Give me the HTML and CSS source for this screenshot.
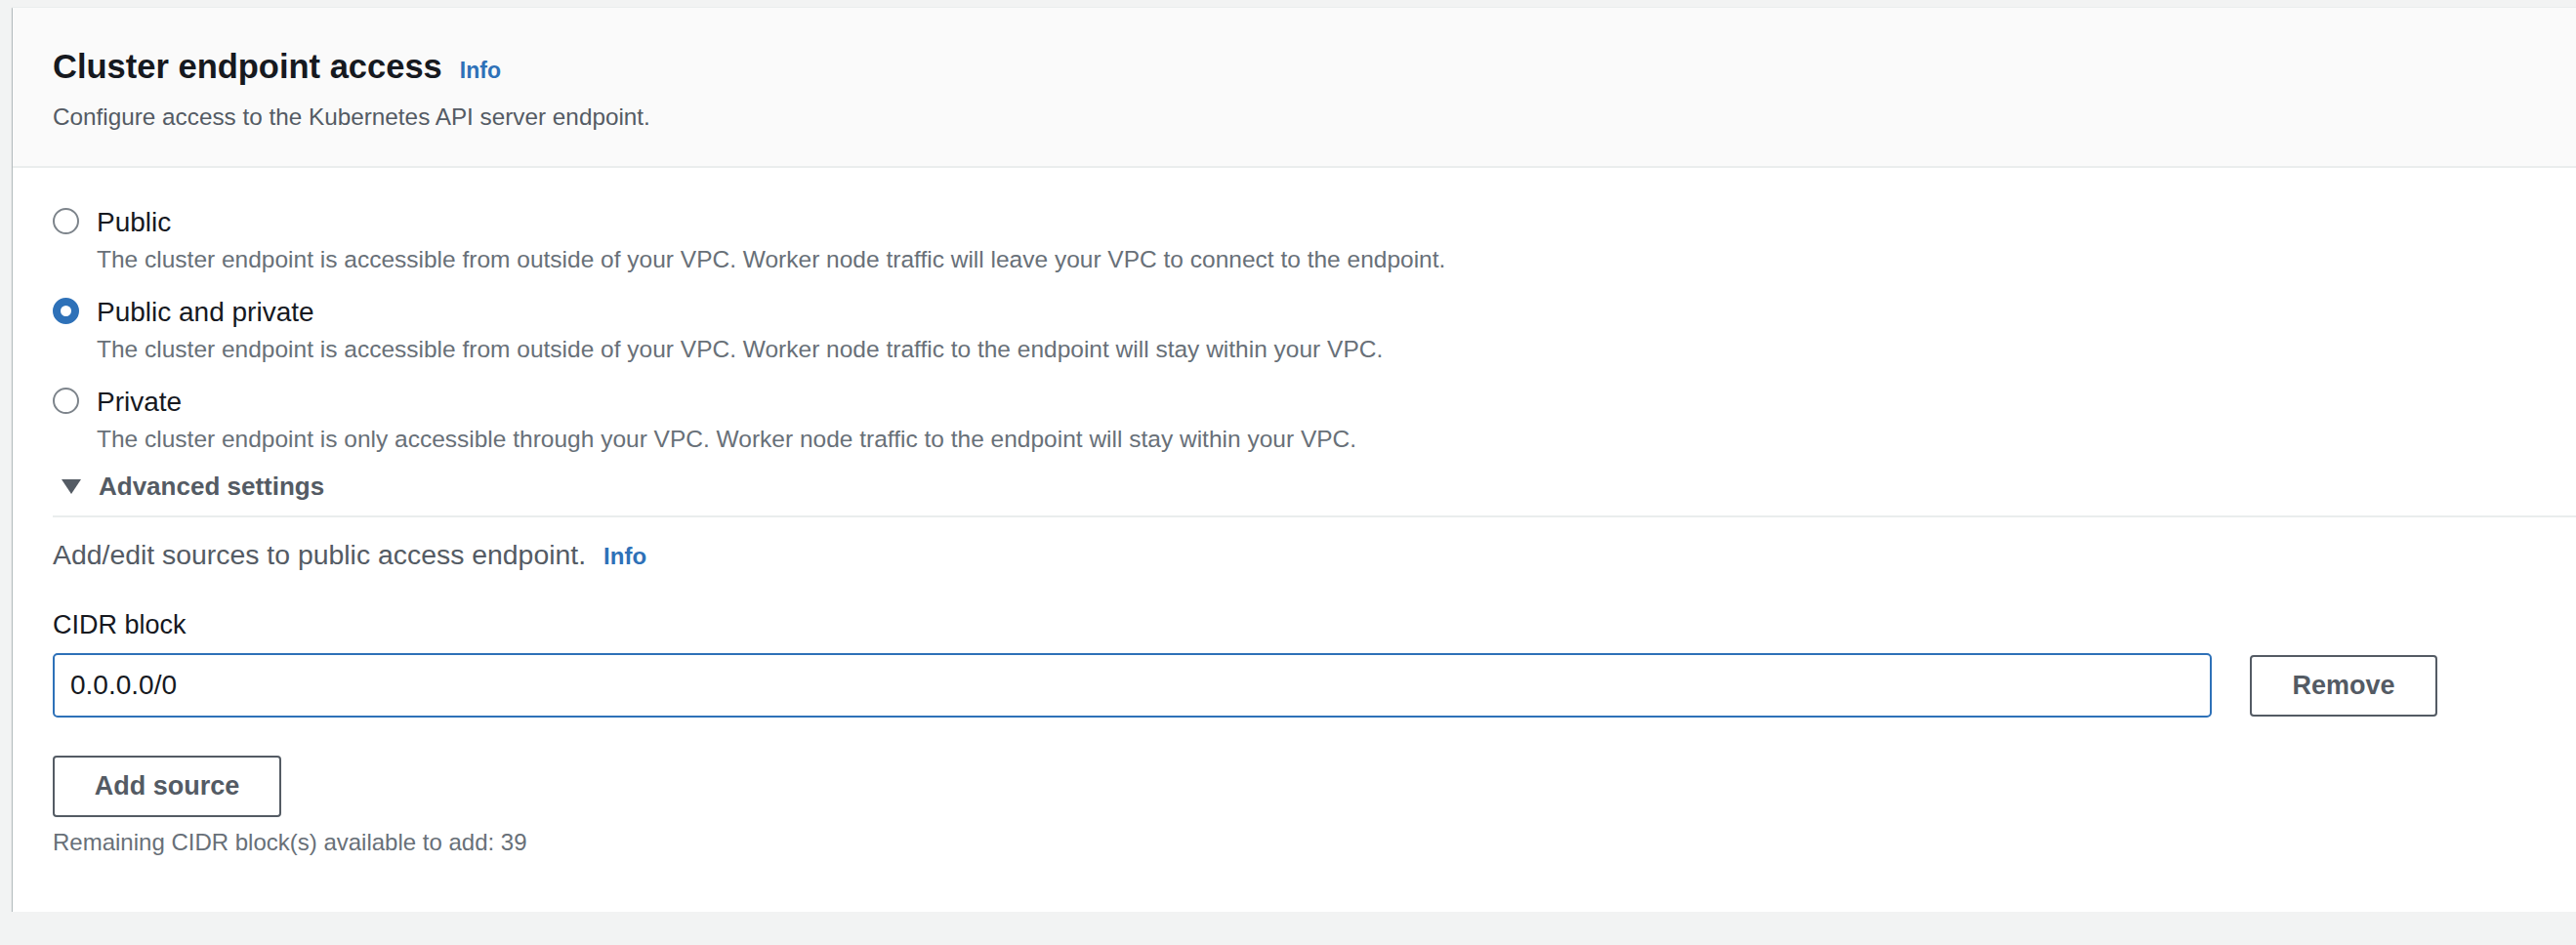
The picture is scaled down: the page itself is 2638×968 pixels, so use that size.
FILE: index.html
```html
<!DOCTYPE html>
<html lang="en">
<head>
<meta charset="utf-8">
<title>Cluster endpoint access</title>
<link rel="stylesheet" href="styles.css">
</head>
<body>
<div class="card">
  <div class="card-header">
    <h2 class="title">Cluster endpoint access<a class="info info-title">Info</a></h2>
    <p class="subtitle">Configure access to the Kubernetes API server endpoint.</p>
  </div>
  <div class="card-body">
    <div class="radio-group">
      <div class="radio-item">
        <span class="radio"></span>
        <div class="radio-text">
          <div class="radio-label">Public</div>
          <div class="radio-desc">The cluster endpoint is accessible from outside of your VPC. Worker node traffic will leave your VPC to connect to the endpoint.</div>
        </div>
      </div>
      <div class="radio-item">
        <span class="radio checked"></span>
        <div class="radio-text">
          <div class="radio-label">Public and private</div>
          <div class="radio-desc">The cluster endpoint is accessible from outside of your VPC. Worker node traffic to the endpoint will stay within your VPC.</div>
        </div>
      </div>
      <div class="radio-item">
        <span class="radio"></span>
        <div class="radio-text">
          <div class="radio-label">Private</div>
          <div class="radio-desc">The cluster endpoint is only accessible through your VPC. Worker node traffic to the endpoint will stay within your VPC.</div>
        </div>
      </div>
    </div>
    <div class="expander">
      <svg class="caret" width="20" height="15" viewBox="0 0 20 15"><polygon points="0,0 20,0 10,15" fill="#545b64"/></svg>
      <span>Advanced settings</span>
    </div>
    <div class="divider"></div>
    <p class="sources">Add/edit sources to public access endpoint.<a class="info info-sources">Info</a></p>
    <div class="field-label">CIDR block</div>
    <div class="cidr-row">
      <div class="input">0.0.0.0/0</div>
      <button class="btn btn-remove">Remove</button>
    </div>
    <button class="btn btn-add">Add source</button>
    <p class="remaining">Remaining CIDR block(s) available to add: 39</p>
  </div>
</div>
</body>
</html>
```

FILE: styles.css
```css
html, body {
  margin: 0;
  padding: 0;
  background: #f2f3f3;
  overflow: hidden;
}
body {
  padding: 7px 0 0 13px;
  font-family: "Liberation Sans", Arial, sans-serif;
  color: #16191f;
}
.card {
  background: #ffffff;
  box-shadow: 0 2px 1px 0 rgba(0, 28, 36, 0.5), -1px 1px 1px 0 rgba(0, 28, 36, 0.18);
  border-top: 1px solid #eaeded;
}
.card-header {
  background: #fafafa;
  border-bottom: 2px solid #eaeded;
  padding: 40px 0 34px 41px;
}
.title {
  margin: 0;
  font-size: 34.5px;
  line-height: 40px;
  font-weight: 700;
  color: #16191f;
}
.info {
  color: #2e71b8;
  font-weight: 700;
  text-decoration: none;
}
.info-title {
  font-size: 23px;
  margin-left: 18px;
}
.subtitle {
  margin: 12px 0 0 0;
  font-size: 24.3px;
  line-height: 32px;
  color: #545b64;
}
.card-body {
  padding: 38px 0 55px 41px;
}
.radio-group {
  display: flex;
  flex-direction: column;
  gap: 20px;
}
.radio-item {
  display: grid;
  grid-template-columns: 27px 1fr;
  column-gap: 18px;
}
.radio {
  box-sizing: border-box;
  width: 27px;
  height: 27px;
  margin-top: 3px;
  border-radius: 50%;
  border: 2px solid #7d848b;
  background: #fff;
}
.radio.checked {
  border: 8px solid #2e71b8;
}
.radio-label {
  font-size: 28px;
  line-height: 36px;
  color: #16191f;
}
.radio-desc {
  margin-top: 4px;
  font-size: 24.5px;
  line-height: 32px;
  color: #687078;
}
.expander {
  display: flex;
  align-items: center;
  gap: 18px;
  margin-top: 15px;
  padding-left: 9px;
  font-size: 26px;
  line-height: 34px;
  font-weight: 700;
  color: #545b64;
}
.caret {
  display: block;
}
.divider {
  margin-top: 13px;
  height: 2px;
  background: #eaeded;
}
.sources {
  margin: 20px 0 0 0;
  font-size: 28.4px;
  line-height: 36px;
  color: #545b64;
}
.info-sources {
  font-size: 24px;
  margin-left: 18px;
}
.field-label {
  margin-top: 34px;
  font-size: 27px;
  line-height: 36px;
  color: #16191f;
}
.cidr-row {
  display: flex;
  align-items: center;
  gap: 39px;
  margin-top: 11px;
  margin-right: 142px;
}
.input {
  flex: 1;
  box-sizing: border-box;
  height: 66px;
  border: 2px solid #2e71b8;
  border-radius: 5px;
  padding-left: 16px;
  display: flex;
  align-items: center;
  font-size: 28px;
  color: #16191f;
}
.btn {
  box-sizing: border-box;
  height: 63px;
  background: #ffffff;
  border: 2px solid #545b64;
  border-radius: 4px;
  font-family: "Liberation Sans", Arial, sans-serif;
  font-size: 27px;
  font-weight: 700;
  color: #545b64;
  padding: 0;
}
.btn-remove {
  width: 192px;
}
.btn-add {
  display: block;
  width: 234px;
  margin-top: 39px;
}
.remaining {
  margin: 10px 0 0 0;
  font-size: 24px;
  line-height: 32px;
  color: #687078;
}
```
